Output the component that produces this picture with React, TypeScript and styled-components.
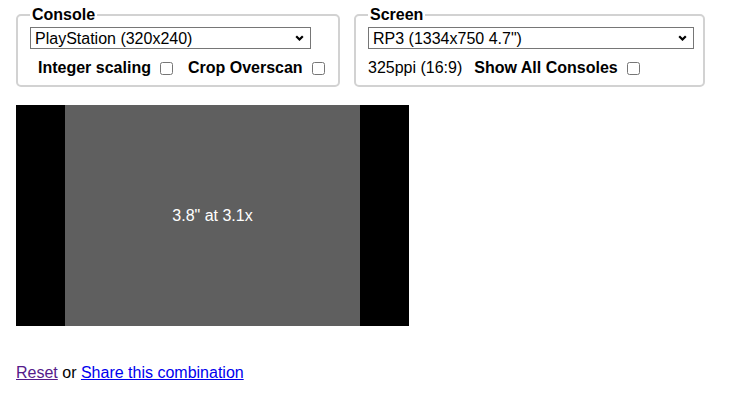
import React from 'react';
import styled, { createGlobalStyle } from 'styled-components';

const GlobalStyle = createGlobalStyle`
  body {
    margin: 0;
    background: #ffffff;
    color: #000000;
    font-family: "Liberation Sans", Arial, sans-serif;
    font-size: 16px;
  }
`;

const Page = styled.div`
  padding: 6px 0 0 16px;
`;

const Controls = styled.div`
  display: flex;
  align-items: flex-start;
  gap: 14px;
`;

const Group = styled.fieldset<{ width: number }>`
  box-sizing: border-box;
  width: ${({ width }) => width}px;
  margin: 0;
  padding: 3px 12px 5px 12px;
  border: 2px solid #d2d2d2;
  border-radius: 5px;
  min-width: 0;
`;

const Legend = styled.legend`
  padding: 0 2px;
  font-weight: bold;
  line-height: 18px;
`;

const SelectWrap = styled.div<{ width: number }>`
  position: relative;
  width: ${({ width }) => width}px;
  height: 22px;
`;

const Select = styled.select`
  appearance: none;
  width: 100%;
  height: 100%;
  margin: 0;
  padding: 0 24px 0 4px;
  border: 1px solid #767676;
  border-radius: 0;
  background: #ffffff;
  color: #000000;
  font-family: inherit;
  font-size: 16px;
`;

const Chevron = styled.svg`
  position: absolute;
  right: 7px;
  top: 8px;
  pointer-events: none;
`;

const Row = styled.div`
  display: flex;
  align-items: center;
  gap: 4px;
  height: 24px;
  margin-top: 7px;
  white-space: nowrap;
`;

const Option = styled.label`
  display: inline-flex;
  align-items: center;
  margin-left: 8px;
  font-weight: bold;
`;

const Check = styled.input`
  width: 13px;
  height: 13px;
  margin: 0 3px 0 9px;
`;

const Info = styled.span`
  font-weight: normal;
`;

const Canvas = styled.div`
  display: flex;
  justify-content: center;
  width: 393px;
  height: 221px;
  margin-top: 18px;
  background: #000000;
`;

const Picture = styled.div`
  display: flex;
  align-items: center;
  justify-content: center;
  width: 295px;
  background: #5f5f5f;
  color: #ffffff;
`;

const Footer = styled.p`
  margin: 38px 0 0;
`;

const Link = styled.a<{ visited?: boolean }>`
  color: ${({ visited }) => (visited ? '#551a8b' : '#0000ee')};
  text-decoration: underline;
`;

const SelectBox: React.FC<{ width: number; value: string }> = ({ width, value }) => (
  <SelectWrap width={width}>
    <Select defaultValue={value}>
      <option>{value}</option>
    </Select>
    <Chevron width="9" height="6" viewBox="0 0 9 6">
      <path d="M1.2 1.2l3.3 3.3 3.3-3.3" fill="none" stroke="#000" strokeWidth="2.2" />
    </Chevron>
  </SelectWrap>
);

export default function App() {
  return (
    <Page>
      <GlobalStyle />
      <Controls>
        <Group width={324}>
          <Legend>Console</Legend>
          <SelectBox width={281} value="PlayStation (320x240)" />
          <Row>
            <Option>
              Integer scaling
              <Check type="checkbox" />
            </Option>
            <Option>
              Crop Overscan
              <Check type="checkbox" />
            </Option>
          </Row>
        </Group>
        <Group width={351}>
          <Legend>Screen</Legend>
          <SelectBox width={326} value={'RP3 (1334x750 4.7")'} />
          <Row>
            <Info>325ppi (16:9)</Info>
            <Option>
              Show All Consoles
              <Check type="checkbox" />
            </Option>
          </Row>
        </Group>
      </Controls>
      <Canvas>
        <Picture>3.8" at 3.1x</Picture>
      </Canvas>
      <Footer>
        <Link href="#" visited>
          Reset
        </Link>{' '}
        or <Link href="#">Share this combination</Link>
      </Footer>
    </Page>
  );
}
